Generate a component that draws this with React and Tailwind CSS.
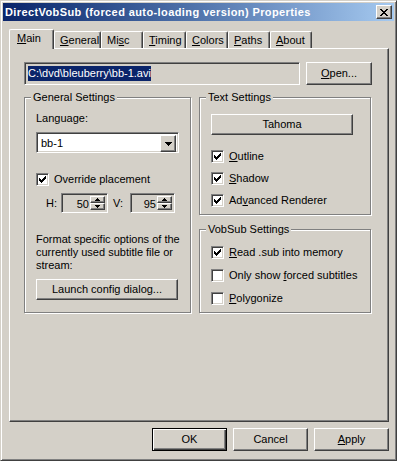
import React from "react";

const raised =
  "border border-t-white border-l-white border-r-[#404040] border-b-[#404040] shadow-[inset_-1px_-1px_0_#808080] bg-[#d4d0c8]";
const sunken =
  "border border-t-[#808080] border-l-[#808080] border-r-white border-b-white shadow-[inset_1px_1px_0_#404040,inset_-1px_-1px_0_#d4d0c8]";
const etched =
  "relative border border-[#808080] shadow-[inset_1px_1px_0_white,1px_1px_0_white]";

const CheckMark = () => (
  <svg width="7" height="7" viewBox="0 0 7 7" shapeRendering="crispEdges">
    <path
      d="M0 2h1v3H0z M1 3h1v3H1z M2 4h1v3H2z M3 3h1v3H3z M4 2h1v3H4z M5 1h1v3H5z M6 0h1v3H6z"
      fill="black"
    />
  </svg>
);

const CheckBox = ({ checked, children }) => (
  <div className="flex items-center h-[13px]">
    <div className={`w-[13px] h-[13px] bg-white flex items-center justify-center ${sunken}`}>
      {checked && <CheckMark />}
    </div>
    <span className="ml-[5px]">{children}</span>
  </div>
);

const GroupBox = ({ label, className, children }) => (
  <div className={`${etched} ${className}`}>
    <span className="absolute top-[-7px] left-[6px] px-[2px] bg-[#d4d0c8] leading-[13px]">
      {label}
    </span>
    {children}
  </div>
);

const Arrow = ({ up }) => (
  <svg width="5" height="3" viewBox="0 0 5 3" shapeRendering="crispEdges">
    <path d={up ? "M2 0h1v1H2z M1 1h3v1H1z M0 2h5v1H0z" : "M0 0h5v1H0z M1 1h3v1H1z M2 2h1v1H2z"} fill="black" />
  </svg>
);

const Spin = ({ value, width }) => (
  <div className={`flex h-[20px] p-[2px] bg-[#d4d0c8] ${sunken} ${width}`}>
    <span className="flex-1 text-right pr-[1px] leading-[16px]">{value}</span>
    <div className="flex flex-col w-[15px]">
      <div className={`h-[8px] flex items-center justify-center ${raised}`}>
        <Arrow up />
      </div>
      <div className={`h-[8px] flex items-center justify-center ${raised}`}>
        <Arrow />
      </div>
    </div>
  </div>
);

const tabs = [
  { label: "Main", u: 0, w: "w-[45px]" },
  { label: "General", u: 0, w: "w-[47px]" },
  { label: "Misc", u: 2, w: "w-[42px]" },
  { label: "Timing", u: 0, w: "w-[43px]" },
  { label: "Colors", u: 0, w: "w-[42px]" },
  { label: "Paths", u: 0, w: "w-[42px]" },
  { label: "About", u: 0, w: "w-[42px]" },
];

const Mnemonic = ({ text, u }) => (
  <>
    {text.slice(0, u)}
    <u className="underline-offset-[1px]">{text[u]}</u>
    {text.slice(u + 1)}
  </>
);

export default function App() {
  return (
    <div className="w-[397px] h-[461px] bg-[#d4d0c8] p-[2px] border border-t-[#d4d0c8] border-l-[#d4d0c8] border-r-[#404040] border-b-[#404040] shadow-[inset_1px_1px_0_white,inset_-1px_-1px_0_#808080] font-['Liberation_Sans',Arial,sans-serif] text-[11px] leading-[13px] text-black select-none">
      {/* title bar */}
      <div className="h-[18px] flex items-center bg-gradient-to-r from-[#0a246a] to-[#a6caf0] pl-[2px] pr-[2px]">
        <span className="flex-1 text-white font-bold text-[11px] tracking-[0.4px] whitespace-nowrap">
          DirectVobSub (forced auto-loading version) Properties
        </span>
        <div className={`w-[16px] h-[14px] flex items-center justify-center ${raised}`}>
          <svg width="8" height="7" viewBox="0 0 8 7" shapeRendering="crispEdges">
            <path
              d="M0 0h2v1H0z M1 1h2v1H1z M2 2h4v1H2z M3 3h2v1H3z M2 4h4v1H2z M1 5h2v1H1z M0 6h2v1H0z M6 0h2v1H6z M5 1h2v1H5z M5 5h2v1H5z M6 6h2v1H6z"
              fill="black"
            />
          </svg>
        </div>
      </div>

      <div className="ml-[6px] w-[380px]">
        {/* tabs */}
        <div className="flex items-end h-[19px] mt-[8px]">
          {tabs.map((t, i) =>
            i === 0 ? (
              <div
                key={t.label}
                className={`relative z-10 ${t.w} h-[20px] -mb-[1px] bg-[#d4d0c8] border-t border-l border-r border-t-white border-l-white border-r-[#404040] rounded-t-[2px] shadow-[inset_-1px_0_0_#808080] pl-[7px] pt-[2px]`}
              >
                <Mnemonic text={t.label} u={t.u} />
              </div>
            ) : (
              <div
                key={t.label}
                className={`${t.w} h-[17px] border-t border-l border-r border-t-white border-l-white border-r-[#404040] rounded-t-[2px] shadow-[inset_-1px_0_0_#808080] pl-[5px] pt-[2px]`}
              >
                <Mnemonic text={t.label} u={t.u} />
              </div>
            )
          )}
        </div>

        {/* panel */}
        <div className="h-[374px] border border-t-white border-l-white border-r-[#404040] border-b-[#404040] shadow-[inset_-1px_-1px_0_#808080] pl-[14px] pt-[13px]">
          <div className="flex gap-[6px]">
            <div className={`w-[276px] h-[23px] bg-[#d4d0c8] pl-[3px] pt-[3px] ${sunken}`}>
              <span className="bg-[#0a246a] text-white inline-block leading-[15px]">
                C:\dvd\bleuberry\bb-1.avi
              </span>
            </div>
            <button className={`w-[66px] h-[23px] ${raised}`}>
              <Mnemonic text="Open..." u={0} />
            </button>
          </div>

          <div className="flex gap-[8px] mt-[12px]">
            <GroupBox label="General Settings" className="w-[167px] h-[216px] pl-[11px] pt-[14px]">
              <div>Language:</div>
              <div className={`mt-[7px] w-[143px] h-[21px] bg-white flex p-[2px] ${sunken}`}>
                <span className="flex-1 pl-[2px] leading-[17px]">bb-1</span>
                <div className={`w-[16px] h-[17px] flex items-center justify-center ${raised}`}>
                  <svg width="7" height="4" viewBox="0 0 7 4" shapeRendering="crispEdges">
                    <path d="M0 0h7v1H0z M1 1h5v1H1z M2 2h3v1H2z M3 3h1v1H3z" fill="black" />
                  </svg>
                </div>
              </div>
              <div className="mt-[20px]">
                <CheckBox checked>Override placement</CheckBox>
              </div>
              <div className="mt-[7px] flex items-center">
                <span className="ml-[10px] w-[15px]">H:</span>
                <Spin value="50" width="w-[47px]" />
                <span className="ml-[5px] w-[17px]">V:</span>
                <Spin value="95" width="w-[45px]" />
              </div>
              <p className="mt-[20px]">
                Format specific options of the
                <br />
                currently used subtitle file or
                <br />
                stream:
              </p>
              <button className={`mt-[7px] w-[142px] h-[21px] ${raised}`}>
                Launch config dialog...
              </button>
            </GroupBox>

            <div className="flex flex-col w-[172px]">
              <GroupBox label="Text Settings" className="h-[118px] pl-[11px] pt-[16px]">
                <button className={`w-[142px] h-[21px] ${raised}`}>Tahoma</button>
                <div className="mt-[15px] flex flex-col gap-[9px]">
                  <CheckBox checked>
                    <Mnemonic text="Outline" u={0} />
                  </CheckBox>
                  <CheckBox checked>
                    <Mnemonic text="Shadow" u={0} />
                  </CheckBox>
                  <CheckBox checked>
                    <Mnemonic text="Advanced Renderer" u={2} />
                  </CheckBox>
                </div>
              </GroupBox>
              <GroupBox label="VobSub Settings" className="mt-[14px] h-[84px] pl-[11px] pt-[16px]">
                <div className="flex flex-col gap-[10px]">
                  <CheckBox checked>
                    <Mnemonic text="Read .sub into memory" u={0} />
                  </CheckBox>
                  <CheckBox>
                    <Mnemonic text="Only show forced subtitles" u={10} />
                  </CheckBox>
                  <CheckBox>
                    <Mnemonic text="Polygonize" u={0} />
                  </CheckBox>
                </div>
              </GroupBox>
            </div>
          </div>
        </div>

        {/* dialog buttons */}
        <div className="flex justify-end gap-[6px] mt-[6px]">
          <button className="w-[75px] h-[23px] bg-[#d4d0c8] border border-black shadow-[inset_1px_1px_0_white,inset_-1px_-1px_0_#404040,inset_-2px_-2px_0_#808080]">
            OK
          </button>
          <button className={`w-[75px] h-[23px] ${raised}`}>Cancel</button>
          <button className={`w-[75px] h-[23px] ${raised}`}>
            <Mnemonic text="Apply" u={0} />
          </button>
        </div>
      </div>
    </div>
  );
}
